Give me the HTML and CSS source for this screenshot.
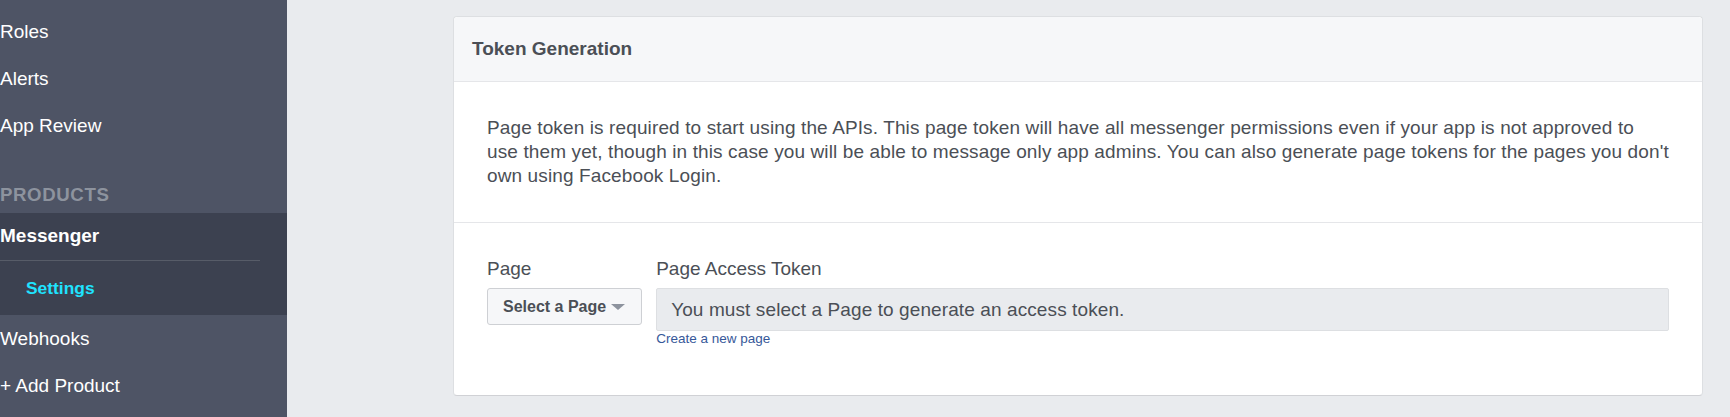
FILE: index.html
```html
<!DOCTYPE html>
<html lang="en">
<head>
    <meta charset="UTF-8">
    <title>Messenger Settings</title>
    <link rel="stylesheet" href="styles.css">
</head>
<body>

<div class="layout">
    <nav class="sidebar">
        <a class="nav-item">Roles</a>
        <a class="nav-item">Alerts</a>
        <a class="nav-item">App Review</a>
        <div class="nav-heading">PRODUCTS</div>
        <div class="nav-group">
            <a class="nav-product">Messenger</a>
            <div class="nav-divider"></div>
            <a class="nav-sub">Settings</a>
        </div>
        <a class="nav-item">Webhooks</a>
        <a class="nav-item">+ Add Product</a>
    </nav>

    <main class="content">
        <section class="card">
            <header class="card-header">Token Generation</header>
            <div class="card-section">
                <p class="intro">Page token is required to start using the APIs. This page token will have all messenger permissions even if your app is not approved to use them yet, though in this case you will be able to message only app admins. You can also generate page tokens for the pages you don't own using Facebook Login.</p>
            </div>
            <div class="card-section form-row">
                <div class="field">
                    <label class="field-label">Page</label>
                    <button class="select-btn">Select a Page<span class="caret"></span></button>
                </div>
                <div class="field field-grow">
                    <label class="field-label">Page Access Token</label>
                    <div class="token-input">You must select a Page to generate an access token.</div>
                    <a class="link">Create a new page</a>
                </div>
            </div>
        </section>
    </main>
</div>

</body>
</html>
```

FILE: styles.css
```css
html, body {
    margin: 0;
    padding: 0;
    height: 100%;
}
body {
    font-family: Arial, "Liberation Sans", sans-serif;
    background-color: #e9ebee;
    color: #4b4f56;
    overflow: hidden;
}
.layout {
    display: flex;
    height: 417px;
}

/* sidebar */
.sidebar {
    width: 287px;
    flex-shrink: 0;
    background-color: #4e5465;
    padding-top: 8px;
    display: flex;
    flex-direction: column;
}
.nav-item,
.nav-product {
    display: block;
    height: 47px;
    line-height: 47px;
    font-size: 19px;
    color: #fff;
    white-space: nowrap;
}
.nav-heading {
    margin-top: 32px;
    margin-bottom: 5px;
    line-height: 27px;
    font-size: 18.67px;
    font-weight: bold;
    letter-spacing: 0.6px;
    color: #8d939e;
}
.nav-group {
    background-color: #3c4150;
    height: 102px;
}
.nav-product {
    height: 45px;
    line-height: 45px;
    font-weight: bold;
}
.nav-divider {
    width: 260px;
    height: 1px;
    margin-top: 2px;
    background-color: #575c68;
}
.nav-sub {
    display: block;
    height: 54px;
    line-height: 55px;
    padding-left: 26px;
    font-size: 17.4px;
    font-weight: bold;
    color: #1fe3ff;
}

/* content */
.content {
    flex: 1;
    padding: 16px 27px 0 166px;
}
.card {
    background-color: #fff;
    border: 1px solid #dddfe2;
    border-bottom-color: #d0d1d5;
    border-radius: 4px;
}
.card-header {
    height: 64px;
    line-height: 64px;
    padding: 0 18px;
    background-color: #f6f7f9;
    border-bottom: 1px solid #e5e6e9;
    border-radius: 4px 4px 0 0;
    font-size: 19px;
    font-weight: bold;
}
.card-section {
    padding: 34px 33px;
}
.card-section + .card-section {
    border-top: 1px solid #e5e6e9;
}
.intro {
    margin: 0;
    font-size: 19px;
    line-height: 24px;
    letter-spacing: 0.12px;
}
.form-row {
    display: flex;
    gap: 14px;
    padding-bottom: 48px;
}
.field {
    display: flex;
    flex-direction: column;
    align-items: flex-start;
}
.field-grow {
    flex: 1;
    align-items: stretch;
}
.field-label {
    font-size: 19px;
    line-height: 24px;
    margin-bottom: 7px;
}
.select-btn {
    display: flex;
    align-items: center;
    height: 37px;
    padding: 0 16px 0 15px;
    background-color: #f6f7f9;
    border: 1px solid #ced0d4;
    border-radius: 3px;
    font-family: inherit;
    font-size: 16px;
    font-weight: bold;
    color: #4b4f56;
}
.caret {
    margin-left: 5px;
    width: 0;
    height: 0;
    border-left: 7px solid transparent;
    border-right: 7px solid transparent;
    border-top: 6px solid #8d939e;
}
.token-input {
    height: 41px;
    line-height: 41px;
    padding: 0 14px;
    background-color: #e9ebee;
    border: 1px solid #dddfe2;
    border-radius: 2px;
    font-size: 19px;
    letter-spacing: 0.1px;
}
.link {
    font-size: 13.5px;
    line-height: 16px;
    color: #365899;
}
```
